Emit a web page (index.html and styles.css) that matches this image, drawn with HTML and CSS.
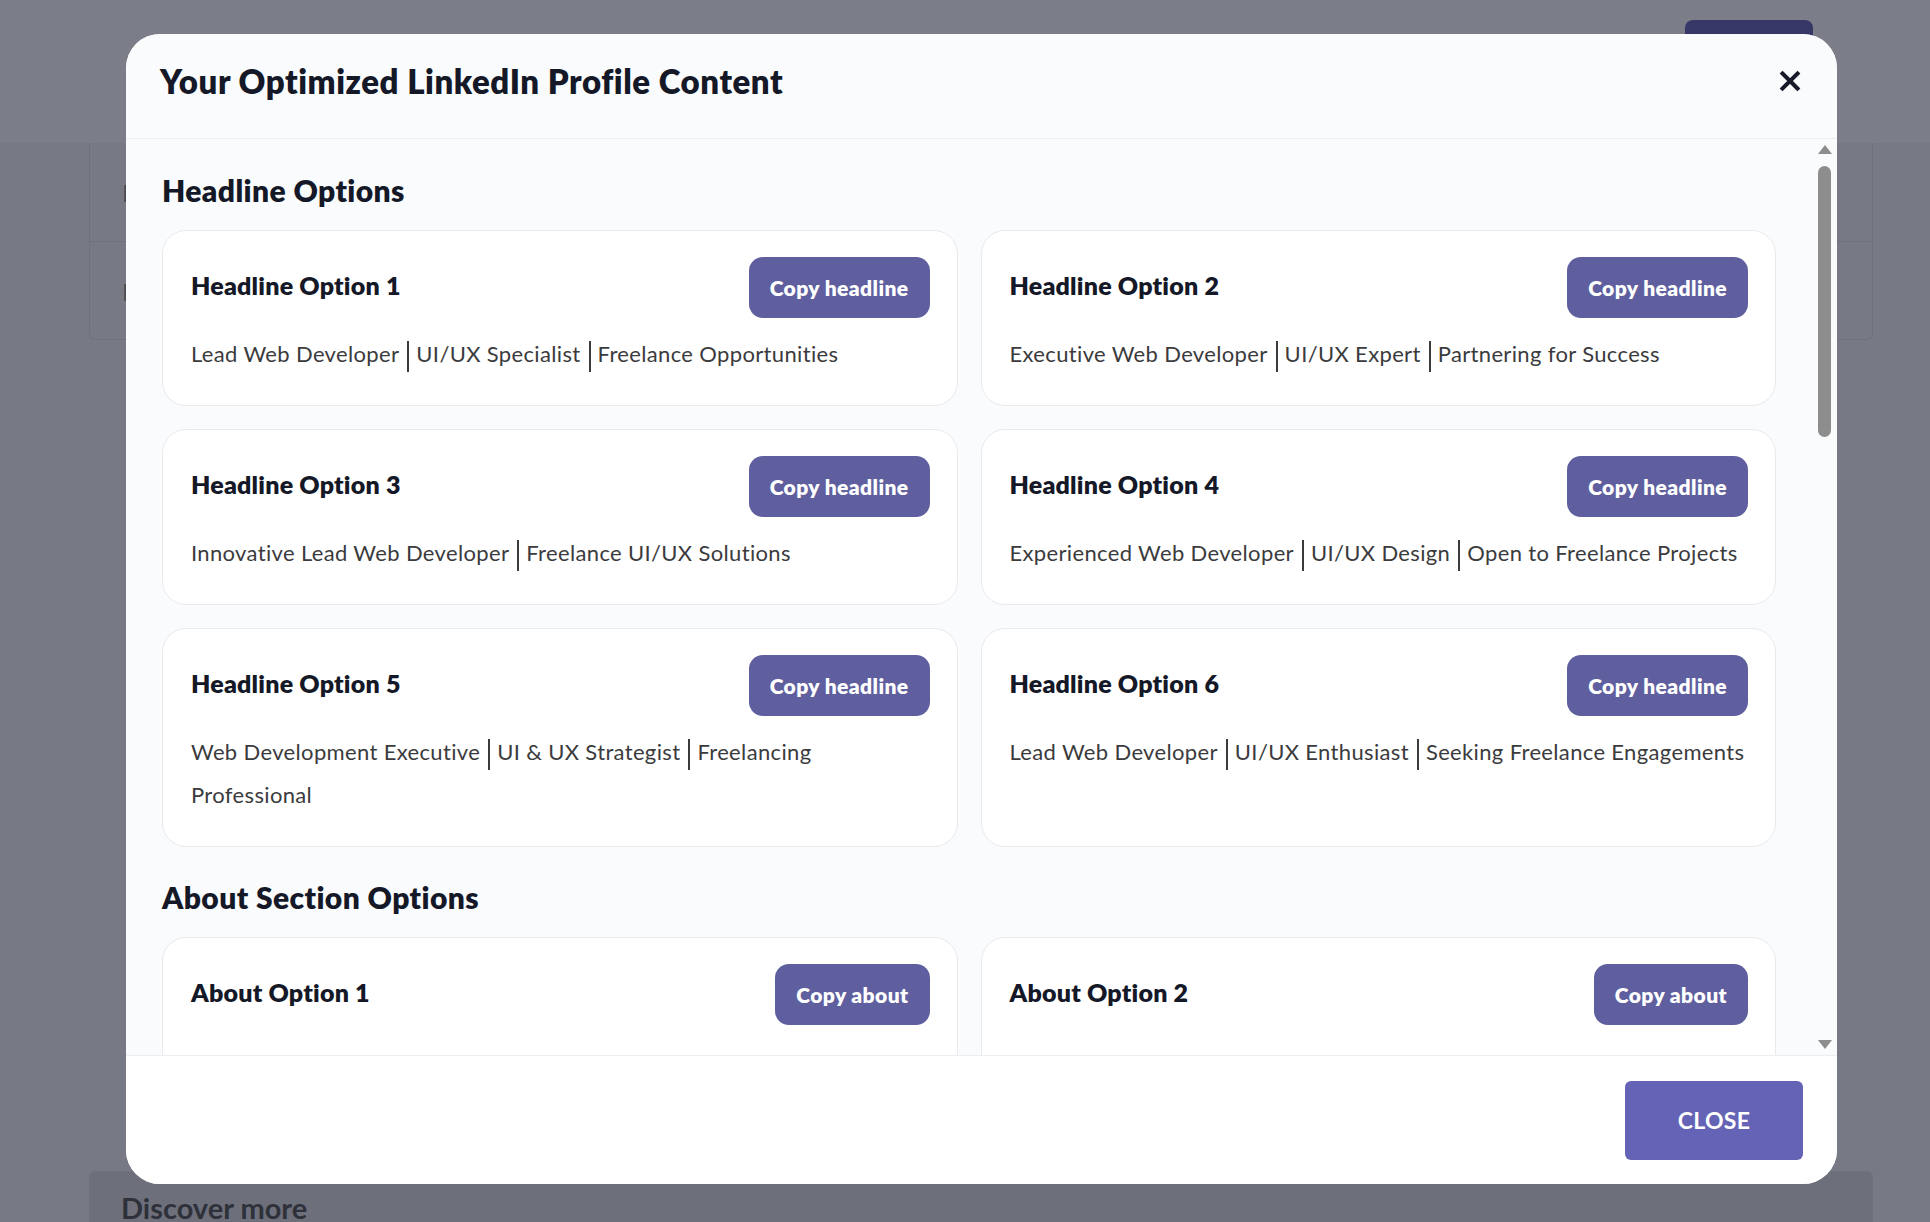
FILE: index.html
```html
<!DOCTYPE html>
<html lang="en">
<head>
  <meta charset="UTF-8">
  <title>LinkedIn Profile Optimizer</title>
  <link rel="stylesheet" href="styles.css">
</head>
<body>

  <!-- page behind the dialog (dimmed) -->
  <div class="page">
    <div class="topbar">
      <button class="top-btn">Generate</button>
    </div>
    <div class="panel">
      <div class="panel-row"><span class="ghost">I</span></div>
      <div class="panel-row"><span class="ghost">P</span></div>
    </div>
    <div class="panel discover">
      <h3>Discover more</h3>
    </div>
  </div>

  <div class="modal">
    <div class="modal-header">
      <h1>Your Optimized LinkedIn Profile Content</h1>
      <button class="close-x" aria-label="Close">
        <svg width="22" height="22" viewBox="0 0 22 22">
          <path d="M3.5 3.5 L18.5 18.5 M18.5 3.5 L3.5 18.5" stroke="#171a28" stroke-width="4" stroke-linecap="square"/>
        </svg>
      </button>
    </div>

    <div class="modal-body">
      <h2>Headline Options</h2>
      <div class="options">
        <div class="option">
          <div class="option-head">
            <h4>Headline Option 1</h4>
            <button class="copy-btn">Copy headline</button>
          </div>
          <p>Lead Web Developer<span class="sep"></span>UI/UX Specialist<span class="sep"></span>Freelance Opportunities</p>
        </div>
        <div class="option">
          <div class="option-head">
            <h4>Headline Option 2</h4>
            <button class="copy-btn">Copy headline</button>
          </div>
          <p>Executive Web Developer<span class="sep"></span>UI/UX Expert<span class="sep"></span>Partnering for Success</p>
        </div>
        <div class="option">
          <div class="option-head">
            <h4>Headline Option 3</h4>
            <button class="copy-btn">Copy headline</button>
          </div>
          <p>Innovative Lead Web Developer<span class="sep"></span>Freelance UI/UX Solutions</p>
        </div>
        <div class="option">
          <div class="option-head">
            <h4>Headline Option 4</h4>
            <button class="copy-btn">Copy headline</button>
          </div>
          <p>Experienced Web Developer<span class="sep"></span>UI/UX Design<span class="sep"></span>Open to Freelance Projects</p>
        </div>
        <div class="option">
          <div class="option-head">
            <h4>Headline Option 5</h4>
            <button class="copy-btn">Copy headline</button>
          </div>
          <p>Web Development Executive<span class="sep"></span>UI &amp; UX Strategist<span class="sep"></span>Freelancing<br>Professional</p>
        </div>
        <div class="option">
          <div class="option-head">
            <h4>Headline Option 6</h4>
            <button class="copy-btn">Copy headline</button>
          </div>
          <p class="nowrap">Lead Web Developer<span class="sep"></span>UI/UX Enthusiast<span class="sep"></span>Seeking Freelance Engagements</p>
        </div>
      </div>

      <h2 class="section-gap">About Section Options</h2>
      <div class="options">
        <div class="option">
          <div class="option-head">
            <h4>About Option 1</h4>
            <button class="copy-btn">Copy about</button>
          </div>
          <p class="about-text">As a Lead Web Developer with a passion for clean, accessible interfaces, I help teams turn complex ideas into fast, reliable products. I am currently open to freelance opportunities.</p>
        </div>
        <div class="option">
          <div class="option-head">
            <h4>About Option 2</h4>
            <button class="copy-btn">Copy about</button>
          </div>
          <p class="about-text">I build websites and applications that balance strong engineering with great design. Let's talk about your next freelance project.</p>
        </div>
      </div>
    </div>

    <!-- scroll indicator of the body -->
    <div class="scrollbar">
      <span class="arrow-up"></span>
      <span class="thumb"></span>
      <span class="arrow-down"></span>
    </div>

    <div class="modal-footer">
      <button class="close-btn">Close</button>
    </div>
  </div>

</body>
</html>
```

FILE: styles.css
```css
body {
  margin: 0;
  font-family: Lato, "Noto Sans", sans-serif;
  background: #777a85;
  height: 1222px;
  overflow: hidden;
}

/* dimmed page behind the dialog */
.page {
  height: 100%;
}
.topbar {
  height: 143px;
  background: #7b7e89;
  display: flex;
  justify-content: flex-end;
  padding-right: 117px;
}
.top-btn {
  margin-top: 20px;
  width: 128px;
  height: 60px;
  border: none;
  border-radius: 8px;
  background: #363766;
  color: #363766;
}
.panel {
  margin: 0 57px 0 89px;
  border: 1px solid #6f727d;
  border-top: none;
  border-radius: 0 0 6px 6px;
  height: 196px;
}
.panel-row {
  height: 98px;
  border-bottom: 1px solid #6f727d;
  display: flex;
  align-items: center;
  padding-left: 32px;
}
.panel-row:last-child {
  border-bottom: none;
}
.ghost {
  color: #4a4c55;
  font-size: 24px;
}
.discover {
  margin-top: 831px;
  border-top: 1px solid #6f727d;
  border-radius: 6px 6px 0 0;
  background: #6d707b;
  height: 60px;
  padding-left: 31px;
}
.discover h3 {
  margin: 18px 0 0;
  font-size: 29px;
  font-weight: 700;
  color: #2f313a;
}

/* dialog */
.modal {
  position: fixed;
  left: 126px;
  top: 34px;
  width: 1711px;
  height: 1150px;
  border-radius: 34px;
  background: #fff;
  display: flex;
  flex-direction: column;
  overflow: hidden;
}
.modal-header {
  height: 104px;
  flex: none;
  background: #fafbfd;
  border-bottom: 1px solid #eceef2;
  display: flex;
  align-items: center;
  justify-content: space-between;
  padding: 0 36px 0 34px;
}
.modal-header h1 {
  margin: 0 0 11px;
  font-size: 33px;
  font-weight: 800;
  color: #141827;
  letter-spacing: 0.55px;
}
.close-x {
  border: none;
  background: none;
  padding: 0;
  margin-bottom: 11px;
  width: 22px;
  height: 22px;
}

.modal-body {
  flex: 1;
  overflow: hidden;
  background: #fafbfd;
  padding: 34px 61px 40px 36px;
}
.modal-body h2 {
  margin: 0 0 23px;
  font-size: 30px;
  line-height: 34px;
  font-weight: 800;
  color: #141827;
  letter-spacing: 0.4px;
}
.modal-body h2.section-gap {
  margin-top: 33px;
}
.options {
  display: grid;
  grid-template-columns: 1fr 1fr;
  gap: 23px 23px;
}
.option {
  background: #fff;
  border: 1px solid #e9eaee;
  border-radius: 24px;
  padding: 26px 27px 30px 28px;
}
.option-head {
  display: flex;
  align-items: center;
  justify-content: space-between;
}
.option-head h4 {
  margin: 0 0 5px;
  font-size: 25px;
  font-weight: 800;
  color: #141827;
  letter-spacing: 0.2px;
}
.copy-btn {
  height: 61px;
  padding: 0 21px;
  border: none;
  border-radius: 14px;
  background: #5f5f9f;
  color: #fff;
  font-family: inherit;
  font-size: 21px;
  font-weight: 800;
  letter-spacing: 0.4px;
}
.option p {
  margin: 14px 0 0;
  font-size: 22px;
  line-height: 43px;
  color: #3b3b3d;
  letter-spacing: 0.35px;
}
.option p.nowrap {
  white-space: nowrap;
}
.option p.about-text {
  margin-top: 40px;
}
.sep {
  display: inline-block;
  width: 2px;
  height: 31px;
  background: #3b3b3d;
  vertical-align: middle;
  margin: 0 7px 0 8px;
}

.scrollbar {
  position: absolute;
  top: 111px;
  bottom: 135px;
  right: 6px;
  width: 13px;
  display: flex;
  flex-direction: column;
  align-items: center;
}
.arrow-up,
.arrow-down {
  width: 0;
  height: 0;
  border-left: 7px solid transparent;
  border-right: 7px solid transparent;
}
.arrow-up {
  border-bottom: 9px solid #8d8d8d;
}
.arrow-down {
  margin-top: auto;
  border-top: 9px solid #8d8d8d;
}
.thumb {
  margin-top: 12px;
  width: 13px;
  height: 271px;
  border-radius: 7px;
  background: #8d8d8d;
}

.modal-footer {
  height: 128px;
  flex: none;
  border-top: 1px solid #eceef2;
  background: #fff;
  display: flex;
  align-items: center;
  justify-content: flex-end;
  padding-right: 34px;
}
.close-btn {
  width: 178px;
  height: 79px;
  border: none;
  border-radius: 6px;
  background: #6563b5;
  color: #fff;
  font-family: inherit;
  font-size: 23px;
  font-weight: 700;
  text-transform: uppercase;
  letter-spacing: 0.3px;
}
```
